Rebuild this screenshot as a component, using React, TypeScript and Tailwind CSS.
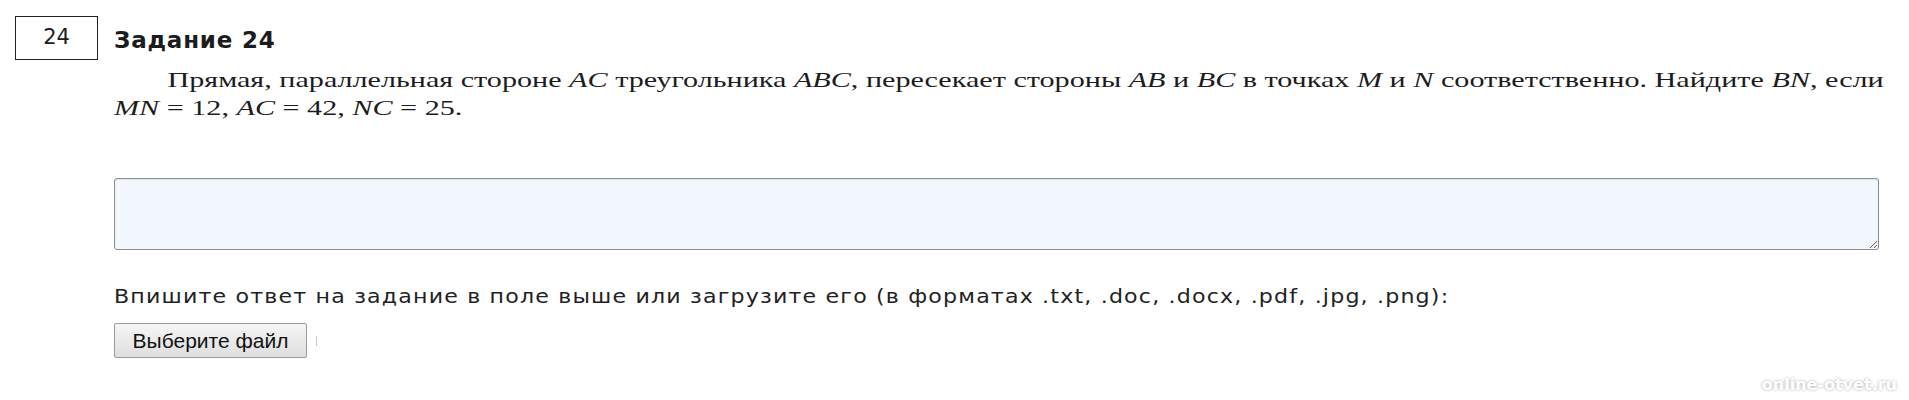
export default function App() {
  return (
    <main className="relative h-[400px] w-[1909px] overflow-hidden bg-white text-[#1c1c1c]">
      <div className="flex pl-[15px] pt-[16px]">
        <div className="flex h-[44px] w-[83px] shrink-0 items-center justify-center border border-[#222] font-['DejaVu_Sans',sans-serif] text-[21px]">
          24
        </div>
        <div className="ml-[16px] flex-1 pr-[28px]">
          <h2 className="mt-[10px] font-['DejaVu_Sans',sans-serif] text-[23px] font-bold leading-[28px] tracking-[0.8px]">
            Задание 24
          </h2>
          {/* the source is stretched sideways, so the text is widened */}
          <p className="mt-[12px] w-[1400px] origin-left scale-x-[1.37] indent-[39px] font-['Liberation_Serif',serif] text-[22px] leading-[28px]">
            Прямая, параллельная стороне <i>AC</i> треугольника <i>ABC</i>, пересекает стороны <i>AB</i> и <i>BC</i> в
            точках <i>M</i> и <i>N</i> соответственно. Найдите <i>BN</i>, если
            <br />
            <i>MN</i>&nbsp;=&nbsp;12, <i>AC</i>&nbsp;=&nbsp;42, <i>NC</i>&nbsp;=&nbsp;25.
          </p>
          <textarea className="mt-[56px] block h-[72px] w-[1765px] rounded-[3px] border border-[#8c8c8c] bg-[#f3f8fe] shadow-[inset_0_1px_2px_rgba(0,0,0,0.08)]" />
          <p className="mt-[34px] w-[1300px] origin-left scale-x-[1.165] font-['DejaVu_Sans',sans-serif] text-[19px] leading-[24px] tracking-[1px] text-[#222]">
            Впишите ответ на задание в поле выше или загрузите его (в форматах .txt, .doc, .docx, .pdf, .jpg, .png):
          </p>
          <div className="mt-[15px] flex items-center">
            <button className="h-[35px] w-[193px] rounded-[2px] border border-[#9a9a9a] bg-gradient-to-b from-[#f6f6f6] to-[#dedede] font-['Liberation_Sans',sans-serif] text-[21px] text-[#111]">
              Выберите файл
            </button>
            <span className="ml-[9px] h-[10px] w-px bg-[#c8c8c8]" />
          </div>
        </div>
      </div>
      <span className="absolute right-[12px] bottom-[3px] font-['DejaVu_Sans',sans-serif] text-[16px] font-bold text-white [text-shadow:0_0_3px_rgba(0,0,0,0.35)]">
        online-otvet.ru
      </span>
    </main>
  )
}
